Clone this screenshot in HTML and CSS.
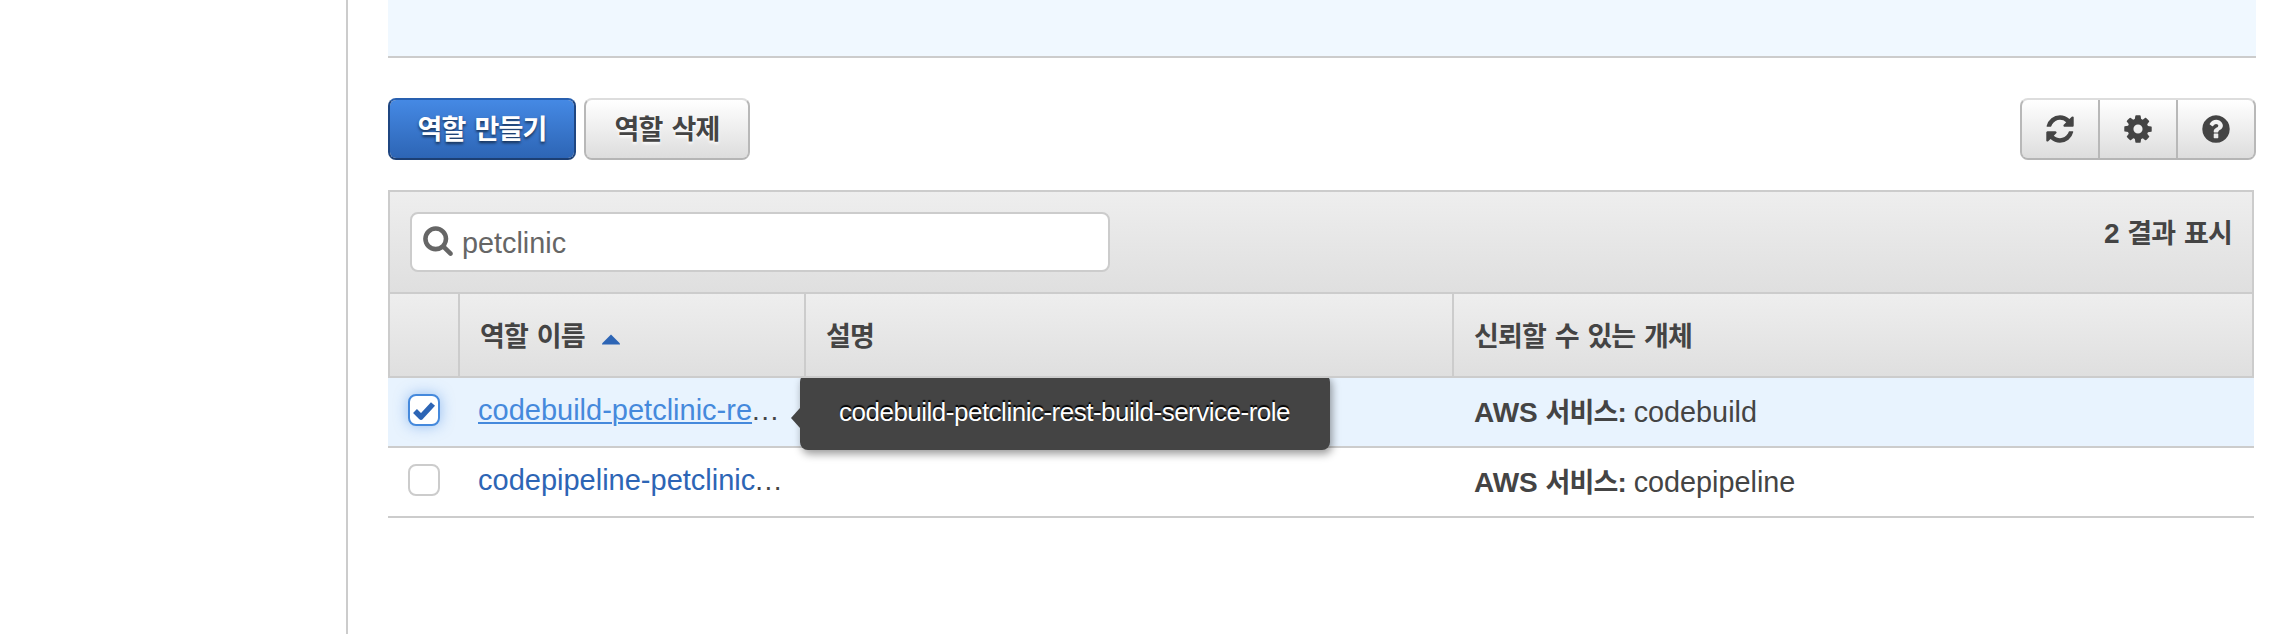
FILE: index.html
```html
<!DOCTYPE html>
<html lang="ko">
<head>
<meta charset="utf-8">
<title>IAM 역할</title>
<link rel="stylesheet" href="styles.css">
</head>
<body>
<div class="page">
  <aside class="sidebar"></aside>
  <main class="content">
    <section class="info-panel"></section>
    <div class="actions">
      <button class="btn btn-primary">역할 만들기</button>
      <button class="btn btn-default">역할 삭제</button>
      <div class="icon-group">
        <button class="icon-btn" aria-label="새로 고침"><svg viewBox="0 0 1792 1792"><path d="M1639 1056q0 5-1 7-64 268-268 434.5t-478 166.5q-146 0-282.5-55t-243.5-157l-129 129q-19 19-45 19t-45-19-19-45v-448q0-26 19-45t45-19h448q26 0 45 19t19 45-19 45l-137 137q71 66 161 102t187 36q134 0 250-65t186-179q11-17 53-117 8-23 30-23h192q13 0 22.5 9.500t9.500 22.500zm25-800v448q0 26-19 45t-45 19h-448q-26 0-45-19t-19-45 19-45l138-138q-148-137-349-137-134 0-250 65t-186 179q-11 17-53 117-8 23-30 23h-199q-13 0-22.500-9.500t-9.500-22.500v-7q65-268 270-434.500t480-166.500q146 0 284 55.500t245 156.500l130-129q19-19 45-19t45 19 19 45z"/></svg></button>
        <button class="icon-btn" aria-label="설정"><svg viewBox="0 0 1792 1792"><path d="M1152 896q0-106-75-181t-181-75-181 75-75 181 75 181 181 75 181-75 75-181zm512-109v222q0 12-8 23t-20 13l-185 28q-19 54-39 91 35 50 107 138 10 12 10 25t-9 23q-27 37-99 108t-94 71q-12 0-26-9l-138-108q-44 23-91 38-16 136-29 186-7 28-36 28h-222q-14 0-24.500-8.500t-11.500-21.500l-28-184q-49-16-90-37l-141 107q-10 9-25 9-14 0-25-11-126-114-165-168-7-10-7-23 0-12 8-23 15-21 51-66.500t54-70.500q-27-50-41-99l-183-27q-13-2-21-12.500t-8-23.500v-222q0-12 8-23t19-13l186-28q14-46 39-92-40-57-107-138-10-12-10-24 0-10 9-23 26-36 98.500-107.500t94.500-71.500q13 0 26 10l138 107q44-23 91-38 16-136 29-186 7-28 36-28h222q14 0 24.500 8.500t11.500 21.500l28 184q49 16 90 37l142-107q9-9 24-9 13 0 25 10 129 119 165 170 7 8 7 22 0 12-8 23-15 21-51 66.500t-54 70.500q26 50 41 98l183 28q13 2 21 12.500t8 23.500z"/></svg></button>
        <button class="icon-btn" aria-label="도움말"><svg viewBox="0 0 1792 1792"><path d="M1024 1376v-192q0-14-9-23t-23-9h-192q-14 0-23 9t-9 23v192q0 14 9 23t23 9h192q14 0 23-9t9-23zm256-672q0-88-55.500-163t-138.500-116-170-41q-243 0-371 213-15 24 8 42l132 100q7 6 19 6 16 0 25-12 53-68 86-92 34-24 86-24 48 0 85.500 26t37.500 59q0 38-20 61t-68 45q-63 28-115.500 86.500t-52.500 125.500v36q0 14 9 23t23 9h192q14 0 23-9t9-23q0-19 21.500-49.500t54.500-49.500q32-18 49-28.500t46-35 44.500-48 28-60.500 12.500-81zm384 192q0 209-103 385.500t-279.500 279.500-385.500 103-385.500-103-279.500-279.500-103-385.500 103-385.500 279.500-279.500 385.500-103 385.500 103 279.500 279.500 103 385.500z"/></svg></button>
      </div>
    </div>
    <section class="table">
      <div class="toolbar">
        <div class="search">
          <svg viewBox="0 0 1792 1792"><path d="M1216 832q0-185-131.500-316.500t-316.500-131.500-316.500 131.500-131.500 316.500 131.500 316.500 316.500 131.500 316.500-131.500 131.500-316.500zm512 832q0 52-38 90t-90 38q-54 0-90-38l-343-342q-179 124-399 124-143 0-273.500-55.500t-225-150-150-225-55.500-273.500 55.500-273.500 150-225 225-150 273.500-55.500 273.500 55.500 225 150 150 225 55.500 273.500q0 220-124 399l343 343q37 37 37 90z"/></svg>
          <span class="query">petclinic</span>
        </div>
        <div class="count"><span class="latin">2</span> 결과 표시</div>
      </div>
      <div class="row head">
        <div class="th"></div>
        <div class="th">역할 이름<svg class="sort" viewBox="0 0 18 10"><path d="M9 0L18 9V10H0V9Z"/></svg></div>
        <div class="th">설명</div>
        <div class="th">신뢰할 수 있는 개체</div>
      </div>
      <div class="row selected">
        <div class="td check-cell"><span class="checkbox checked"><svg viewBox="0 0 28 28"><path d="M5 15L11 21L23 8" /></svg></span></div>
        <div class="td name"><a class="hover">codebuild-petclinic-re</a><span class="dots">...</span>
          <div class="tooltip">codebuild-petclinic-rest-build-service-role</div>
        </div>
        <div class="td"></div>
        <div class="td entity"><b>AWS <span class="ko">서비스</span>:</b> <span class="svc">codebuild</span></div>
      </div>
      <div class="row">
        <div class="td check-cell"><span class="checkbox"></span></div>
        <div class="td name"><a>codepipeline-petclinic</a><span class="dots">...</span></div>
        <div class="td"></div>
        <div class="td entity"><b>AWS <span class="ko">서비스</span>:</b> <span class="svc">codepipeline</span></div>
      </div>
    </section>
  </main>
</div>
</body>
</html>
```
FILE: styles.css
```css
* { box-sizing: border-box; }
body {
  margin: 0;
  background: #fff;
  color: #444;
  font: 28px/34px "Liberation Sans", "Noto Sans CJK KR", sans-serif;
}
button { font: inherit; color: inherit; margin: 0; padding: 0; }
.page { display: flex; height: 634px; overflow: hidden; }
.sidebar { width: 348px; flex: none; border-right: 2px solid #ccc; }
.content { width: 1908px; flex: none; padding-left: 40px; }
.info-panel { height: 58px; background: #f0f8ff; border-bottom: 2px solid #ccc; }

.actions { display: flex; gap: 8px; margin-top: 40px; height: 62px; }
.btn {
  font: bold 27px/34px "Noto Sans CJK KR", sans-serif;
  letter-spacing: -.85px;
  word-spacing: 2.5px;
  padding-bottom: 2px;
  border: 2px solid;
  border-radius: 8px;
  white-space: nowrap;
}
.btn-primary {
  width: 188px;
  color: #fff;
  background: linear-gradient(#4589e4, #2d65b5) padding-box;
  border-color: #2860b0 #1f4681 #1c3f74;
  text-shadow: 0 2px 3px rgba(0, 0, 0, .6);
}
.btn-default {
  width: 166px;
  background: linear-gradient(#fff, #ddd) padding-box;
  border-color: #ddd #b8b8b8 #b5b5b5;
  text-shadow: 0 2px 3px #fff;
}
.icon-group {
  display: flex;
  width: 236px;
  margin-left: auto;
  border: 2px solid;
  border-color: #ddd #b8b8b8 #b5b5b5;
  border-radius: 8px;
  background: linear-gradient(#fff, #ddd) padding-box;
}
.icon-btn {
  flex: none;
  width: 78px;
  display: flex;
  align-items: center;
  justify-content: center;
  padding-bottom: 1px;
  border: 0;
  border-right: 2px solid #b8b8b8;
  background: none;
}
.icon-btn:last-child { width: 76px; border-right: 0; }
.icon-btn svg { width: 32px; height: 32px; fill: #444; }

.table { width: 1866px; margin-top: 30px; }
.toolbar {
  display: flex;
  justify-content: space-between;
  height: 102px;
  padding: 20px 20px 0;
  border: 2px solid #ccc;
  border-bottom: 0;
  background: linear-gradient(#eee, #dfdfdf);
}
.search {
  display: flex;
  align-items: center;
  width: 700px;
  height: 60px;
  padding-left: 10px;
  border: 2px solid #ccc;
  border-radius: 8px;
  background: #fff;
}
.search svg { width: 32px; height: 32px; fill: #666; margin: -4px 8px 0 0; }
.query { color: #666; font-size: 28.8px; margin-top: 1px; }
.count { font: bold 27px/38px "Noto Sans CJK KR", sans-serif; letter-spacing: -.85px; word-spacing: 2px; margin: 1px 0 0; }
.latin { font: bold 28px/34px "Liberation Sans", sans-serif; }

.row {
  display: grid;
  grid-template-columns: 72px 346px 648px 800px;
  height: 70px;
  border-bottom: 2px solid #ccc;
}
.head {
  position: relative;
  z-index: 2;
  height: 86px;
  border: 2px solid #ccc;
  grid-template-columns: 70px 346px 648px 798px;
  background: linear-gradient(#eee, #dfdfdf);
  font: bold 27px/38px "Noto Sans CJK KR", sans-serif;
  letter-spacing: -.85px;
  word-spacing: 2px;
}
.th { display: flex; align-items: center; padding: 0 0 1px 20px; border-right: 2px solid #ccc; }
.th:last-child { border-right: 0; }
.sort { width: 18px; height: 11px; margin: 10px 0 0 17px; fill: #2d65b5; }
.td { padding: 17px 0 0 20px; white-space: nowrap; }
.ko { font-family: "Noto Sans CJK KR", sans-serif; font-size: 27px; line-height: 30px; letter-spacing: -.85px; }
.svc { font-size: 28.8px; margin-left: -1px; }
.selected { background: #e8f3fe; }
.check-cell { padding-top: 16px; }
.checkbox {
  display: block;
  width: 32px;
  height: 32px;
  border: 2px solid #ccc;
  border-radius: 8px;
  background: #fff;
}
.checked { border-color: #4589dc; box-shadow: 0 0 14px rgba(69, 137, 228, .5); }
.checked svg { display: block; width: 28px; height: 28px; fill: none; stroke: #2d65b5; stroke-width: 5.5; stroke-linejoin: round; }
.name { position: relative; padding: 15px 0 0 18px; }
.name a { color: #2d65b5; font-size: 29px; }
.name .hover { color: #4589dc; text-decoration: underline; text-decoration-thickness: 2px; text-underline-offset: 2px; }
.dots { letter-spacing: 1.5px; }
.tooltip {
  position: absolute;
  z-index: 1;
  left: 340px;
  top: -4px;
  width: 530px;
  height: 76px;
  padding: 21px 0 0 39px;
  border-radius: 8px;
  background: #444;
  color: #fff;
  font-size: 26px;
  letter-spacing: -.5px;
  text-shadow: 0 -2px 1px #000;
  box-shadow: 2px 4px 8px rgba(0, 0, 0, .4);
}
.tooltip::before {
  content: "";
  position: absolute;
  left: -9px;
  top: 34px;
  border: solid transparent;
  border-width: 10px 9px 10px 0;
  border-right-color: #444;
}
```
